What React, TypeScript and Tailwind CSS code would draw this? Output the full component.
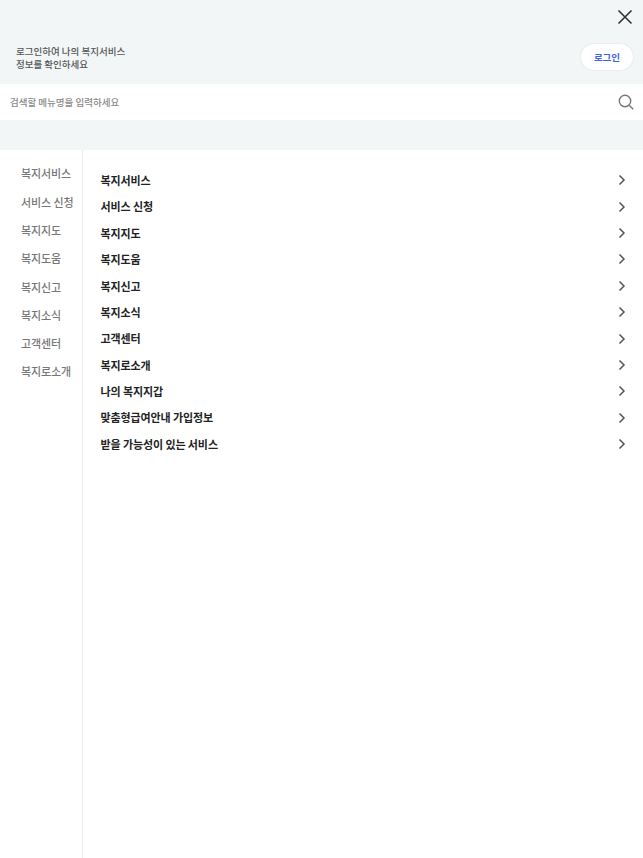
import { FC } from "react";

const sideMenus = ["복지서비스", "서비스 신청", "복지지도", "복지도움", "복지신고", "복지소식", "고객센터", "복지로소개"];
const mainMenus = [...sideMenus, "나의 복지지갑", "맞춤형급여안내 가입정보", "받을 가능성이 있는 서비스"];

const App: FC = () => {
  return (
    <div className="h-[858px] w-[643px] overflow-hidden bg-white font-['Noto_Sans_CJK_KR','Noto_Sans',sans-serif]">
      <div className="h-[84px] bg-[#f2f6f7] relative flex items-end justify-between pl-4 pr-[10px] pb-[14px]">
        <button className="absolute right-[9px] top-[8px] text-[#333]">
          <svg width="18" height="18" viewBox="0 0 18 18" fill="none" stroke="currentColor" strokeWidth="1.6">
            <path d="M2.5 2.5 15.500 15.500M15.500 2.500 2.500 15.500" />
          </svg>
        </button>
        <p className="text-[9.500px] leading-[12.500px] font-medium text-[#555]">
          로그인하여 나의 복지서비스
          <br />
          정보를 확인하세요
        </p>
        <button className="h-[26px] w-[52px] rounded-full bg-white text-[9.500px] font-bold text-[#3f62d8] shadow-[0_0_2px_rgba(0,0,0,0.12)]">
          로그인
        </button>
      </div>
      <div className="h-[36px] flex items-center justify-between pl-[10px] pr-[9px]">
        <span className="text-[9.500px] font-medium text-[#8a8a8a]">검색할 메뉴명을 입력하세요</span>
        <svg width="16" height="16" viewBox="0 0 16 16" fill="none" stroke="#777" strokeWidth="1.4">
          <circle cx="7" cy="7" r="5.700" />
          <path d="m11.200 11.200 4 4" />
        </svg>
      </div>
      <div className="h-[30px] bg-[#f2f6f7]" />
      <div className="flex h-[708px]">
        <ul className="w-[83px] shrink-0 border-r border-[#eeeeee] pl-[21px] pt-[9.500px]">
          {sideMenus.map((menu) => (
            <li key={menu} className="h-[28.300px] flex items-center whitespace-nowrap text-[11px] font-medium tracking-[-0.1px] text-[#777]">
              {menu}
            </li>
          ))}
        </ul>
        <ul className="flex-1 pl-[17.500px] pr-[17px] pt-[17px]">
          {mainMenus.map((menu) => (
            <li key={menu} className="h-[26.400px] flex items-center justify-between text-[11px] font-bold tracking-[-0.1px] text-[#222]">
              <span>{menu}</span>
              <svg width="8" height="12" viewBox="0 0 8 12" fill="none" stroke="#555" strokeWidth="1.5">
                <path d="M1.500 1.500 6 6 1.500 10.500" />
              </svg>
            </li>
          ))}
        </ul>
      </div>
    </div>
  );
};

export default App;
